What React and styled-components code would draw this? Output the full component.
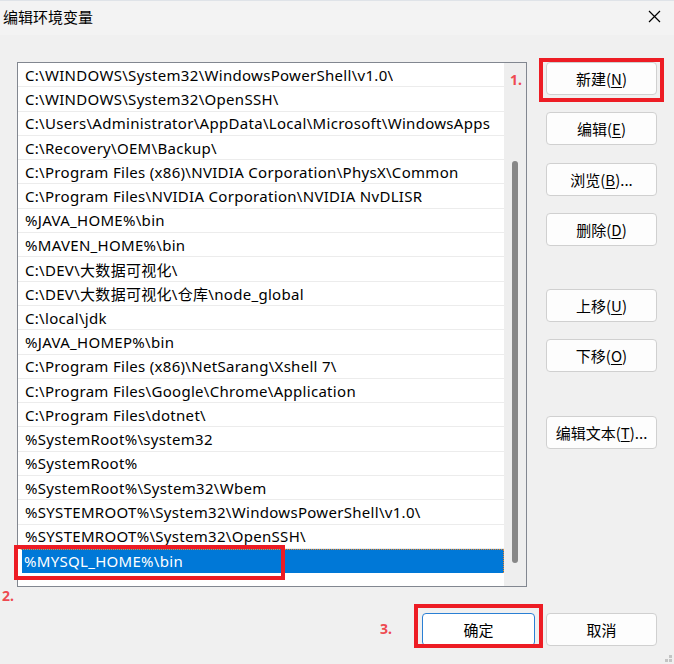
import React from 'react';
import styled, { createGlobalStyle } from 'styled-components';

const GlobalStyle = createGlobalStyle`
  html, body {
    margin: 0;
    padding: 0;
    background: #f0f0f0;
  }
  body {
    font-family: "Noto Sans", "Noto Sans CJK SC", sans-serif;
    color: #000;
  }
`;

const Window = styled.div`
  position: relative;
  width: 674px;
  height: 664px;
  display: flex;
  flex-direction: column;
  background: #f0f0f0;
  overflow: hidden;
`;

const TitleBar = styled.div`
  height: 35px;
  flex: none;
  box-sizing: border-box;
  border-top: 1px solid #dfe3e8;
  background: #f3f3f3;
  display: flex;
  align-items: center;
  justify-content: space-between;
  padding: 0 13px 4px 3px;
`;

const Title = styled.div`
  font-size: 15px;
  font-family: "Noto Sans CJK SC", sans-serif;
`;

const Content = styled.div`
  flex: 1;
  display: flex;
  flex-direction: column;
  padding: 27px 17px 0 17px;
`;

const Main = styled.div`
  display: flex;
  gap: 19px;
`;

const ListBox = styled.div`
  width: 510px;
  height: 525px;
  box-sizing: border-box;
  border: 1px solid #828790;
  background: #fff;
  display: flex;
`;

const Rows = styled.div`
  flex: 1;
  display: flex;
  flex-direction: column;
  min-width: 0;
`;

const Row = styled.div`
  position: relative;
  height: 24.3px;
  flex: none;
  box-sizing: border-box;
  display: flex;
  align-items: center;
  padding-left: 7px;
  font-size: 15px;
  letter-spacing: 0.3px;
  white-space: nowrap;
  border-bottom: 1px solid ${p => (p.$selected ? 'transparent' : '#ececec')};
`;

const RowText = styled.span`
  overflow: hidden;
`;

const EditBox = styled.div`
  height: 24px;
  flex: 1;
  margin-left: -5px;
  padding-left: 2px;
  display: flex;
  align-items: center;
  box-sizing: border-box;
  background: #0078d7;
  color: #fff;
  border-left: 2px solid #fff;
  border-top: 1px dotted #f0882a;
  border-right: 1px dotted #f0882a;
`;

const ScrollTrack = styled.div`
  width: 22px;
  flex: none;
  background: #eeeeee;
  display: flex;
  justify-content: center;
  padding-top: 98px;
  box-sizing: border-box;
`;

const Thumb = styled.div`
  width: 6px;
  height: 402px;
  border-radius: 3px;
  background: #878787;
`;

const Side = styled.div`
  display: flex;
  flex-direction: column;
  gap: 17.3px;
`;

const Button = styled.button`
  position: relative;
  width: ${p => p.$width || 111}px;
  height: 33px;
  box-sizing: border-box;
  border: 1px solid ${p => (p.$primary ? '#2a7fd4' : '#d0d0d0')};
  border-radius: 4px;
  background: ${p => (p.$primary ? '#ffffff' : '#fdfdfd')};
  font-family: "Noto Sans CJK SC", sans-serif;
  font-size: 15px;
  color: #000;
  padding: 0;
  margin-top: ${p => (p.$spaced ? 26 : 0)}px;
  display: flex;
  align-items: center;
  justify-content: center;
`;

const Key = styled.span`
  text-decoration: underline;
  text-underline-offset: 2px;
`;

const Footer = styled.div`
  display: flex;
  justify-content: flex-end;
  gap: 11px;
  margin-top: 26px;
`;

const Mark = styled.div`
  position: absolute;
  left: ${p => p.$l}px;
  top: ${p => p.$t}px;
  width: ${p => p.$w}px;
  height: ${p => p.$h}px;
  box-sizing: border-box;
  border: 4px solid #ed1c24;
  pointer-events: none;
`;

const Step = styled.span`
  position: absolute;
  left: ${p => p.$l}px;
  top: ${p => p.$t}px;
  font-family: "Noto Sans", sans-serif;
  font-weight: 700;
  font-size: 14px;
  color: #ee4a50;
  line-height: 1;
  letter-spacing: 0;
`;

const Grip = styled.div`
  position: absolute;
  right: 2px;
  bottom: 2px;
  width: 7px;
  height: 7px;
  background:
    linear-gradient(#c4c4c4, #c4c4c4) 4px 0 / 3px 3px no-repeat,
    linear-gradient(#c4c4c4, #c4c4c4) 0 4px / 3px 3px no-repeat,
    linear-gradient(#c4c4c4, #c4c4c4) 4px 4px / 3px 3px no-repeat;
`;

const CloseIcon = () => (
  <svg width="13" height="13" viewBox="0 0 13 13">
    <path d="M1 1 L12 12 M12 1 L1 12" stroke="#000" strokeWidth="1.2" fill="none" />
  </svg>
);

const paths = [
  'C:\\WINDOWS\\System32\\WindowsPowerShell\\v1.0\\',
  'C:\\WINDOWS\\System32\\OpenSSH\\',
  'C:\\Users\\Administrator\\AppData\\Local\\Microsoft\\WindowsApps',
  'C:\\Recovery\\OEM\\Backup\\',
  'C:\\Program Files (x86)\\NVIDIA Corporation\\PhysX\\Common',
  'C:\\Program Files\\NVIDIA Corporation\\NVIDIA NvDLISR',
  '%JAVA_HOME%\\bin',
  '%MAVEN_HOME%\\bin',
  'C:\\DEV\\大数据可视化\\',
  'C:\\DEV\\大数据可视化\\仓库\\node_global',
  'C:\\local\\jdk',
  '%JAVA_HOMEP%\\bin',
  'C:\\Program Files (x86)\\NetSarang\\Xshell 7\\',
  'C:\\Program Files\\Google\\Chrome\\Application',
  'C:\\Program Files\\dotnet\\',
  '%SystemRoot%\\system32',
  '%SystemRoot%',
  '%SystemRoot%\\System32\\Wbem',
  '%SYSTEMROOT%\\System32\\WindowsPowerShell\\v1.0\\',
  '%SYSTEMROOT%\\System32\\OpenSSH\\',
];

const sideButtons = [
  { label: '新建', key: 'N' },
  { label: '编辑', key: 'E' },
  { label: '浏览', key: 'B', dots: true },
  { label: '删除', key: 'D' },
  { label: '上移', key: 'U', spaced: true },
  { label: '下移', key: 'O' },
  { label: '编辑文本', key: 'T', dots: true, spaced: true },
];

const App = () => {
  return (
    <Window>
      <GlobalStyle />
      <TitleBar>
        <Title>编辑环境变量</Title>
        <CloseIcon />
      </TitleBar>
      <Content>
        <Main>
          <ListBox>
            <Rows>
              {paths.map((p) => (
                <Row key={p}>
                  <RowText>{p}</RowText>
                </Row>
              ))}
              <Row $selected>
                <EditBox>%MYSQL_HOME%\bin</EditBox>
                <Mark $l={-4} $t={-4} $w={271} $h={35} />
                <Step $l={-16} $t={40}>2.</Step>
              </Row>
            </Rows>
            <ScrollTrack>
              <Thumb />
            </ScrollTrack>
          </ListBox>
          <Side>
            {sideButtons.map((b, i) => (
              <Button key={b.label} $spaced={b.spaced}>
                {b.label}(<Key>{b.key}</Key>){b.dots ? '...' : ''}
                {i === 0 && (
                  <>
                    <Mark $l={-8} $t={-5} $w={125} $h={44} />
                    <Step $l={-37} $t={10}>1.</Step>
                  </>
                )}
              </Button>
            ))}
          </Side>
        </Main>
        <Footer>
          <Button $primary $width={113}>
            确定
            <Mark $l={-9} $t={-10} $w={129} $h={44} />
            <Step $l={-43} $t={8}>3.</Step>
          </Button>
          <Button>取消</Button>
        </Footer>
      </Content>
      <Grip />
    </Window>
  );
};

export default App;
